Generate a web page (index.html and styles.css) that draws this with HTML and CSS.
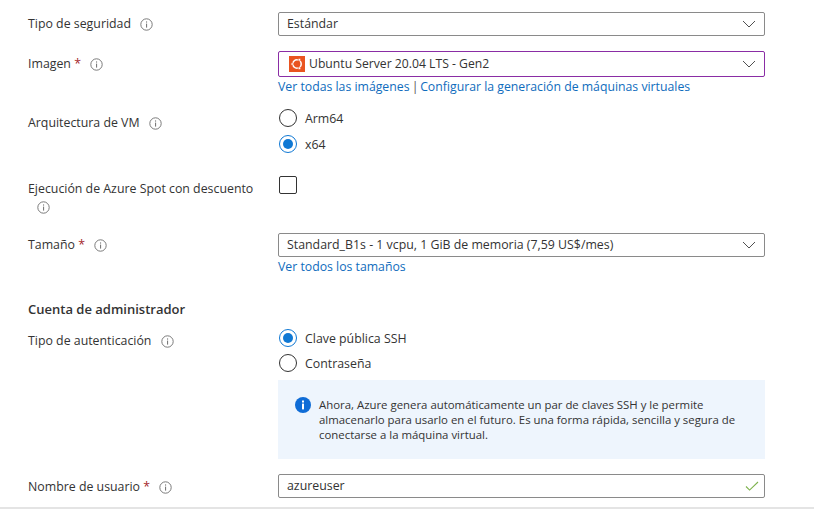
FILE: index.html
```html
<!DOCTYPE html>
<html lang="es">
<head>
    <meta charset="UTF-8">
    <meta name="viewport" content="width=device-width, initial-scale=1.0">
    <title>Crear máquina virtual</title>
    <link rel="stylesheet" href="styles.css">
</head>
<body>
    <svg class="defs" width="0" height="0" aria-hidden="true">
        <symbol id="info" viewBox="0 0 13 13">
            <circle cx="6.5" cy="6.5" r="5.7" fill="none" stroke="#7a7a7a" stroke-width="1"/>
            <rect x="6" y="5.6" width="1.1" height="4" fill="#7a7a7a"/>
            <rect x="6" y="3.4" width="1.1" height="1.2" fill="#7a7a7a"/>
        </symbol>
        <symbol id="chevron" viewBox="0 0 14 8">
            <path d="M1 1l6 6 6-6" fill="none" stroke="#505050" stroke-width="1"/>
        </symbol>
    </svg>

    <div class="form">
        <div class="row row-security">
            <div class="label">Tipo de seguridad <svg class="info"><use href="#info"/></svg></div>
            <div class="field">
                <div class="select">Estándar <svg class="chevron"><use href="#chevron"/></svg></div>
            </div>
        </div>

        <div class="row row-image">
            <div class="label label-image">Imagen <span class="req">*</span> <svg class="info"><use href="#info"/></svg></div>
            <div class="field">
                <div class="select select-focus">
                    <svg class="ubuntu" viewBox="0 0 16 16">
                        <rect width="16" height="16" fill="#e95420"/>
                        <circle cx="8" cy="8" r="4.2" fill="none" stroke="#fff" stroke-width="1.5"/>
                        <circle cx="3.2" cy="8" r="1.3" fill="#fff" stroke="#e95420" stroke-width=".6"/>
                        <circle cx="10.4" cy="3.8" r="1.3" fill="#fff" stroke="#e95420" stroke-width=".6"/>
                        <circle cx="10.4" cy="12.2" r="1.3" fill="#fff" stroke="#e95420" stroke-width=".6"/>
                    </svg>
                    <span class="image-name">Ubuntu Server 20.04 LTS - Gen2</span>
                    <svg class="chevron"><use href="#chevron"/></svg>
                </div>
                <div class="links"><a href="#">Ver todas las imágenes</a> <span class="sep">|</span> <a href="#">Configurar la generación de máquinas virtuales</a></div>
            </div>
        </div>

        <div class="row row-arch">
            <div class="label">Arquitectura de VM <svg class="info"><use href="#info"/></svg></div>
            <div class="field radios">
                <div class="radio"><span class="dot"></span>Arm64</div>
                <div class="radio"><span class="dot on"></span>x64</div>
            </div>
        </div>

        <div class="row row-spot">
            <div class="label label-wrap">Ejecución de Azure Spot con descuento <svg class="info"><use href="#info"/></svg></div>
            <div class="field"><span class="checkbox"></span></div>
        </div>

        <div class="row row-size">
            <div class="label">Tamaño <span class="req">*</span> <svg class="info"><use href="#info"/></svg></div>
            <div class="field">
                <div class="select">Standard_B1s - 1 vcpu, 1 GiB de memoria (7,59 US$/mes) <svg class="chevron"><use href="#chevron"/></svg></div>
                <div class="links links-size"><a href="#">Ver todos los tamaños</a></div>
            </div>
        </div>

        <h2>Cuenta de administrador</h2>

        <div class="row row-auth">
            <div class="label">Tipo de autenticación <svg class="info"><use href="#info"/></svg></div>
            <div class="field">
                <div class="radios radios-auth">
                    <div class="radio"><span class="dot on"></span>Clave pública SSH</div>
                    <div class="radio"><span class="dot"></span>Contraseña</div>
                </div>
                <div class="notice">
                    <svg class="notice-icon" viewBox="0 0 16 16">
                        <circle cx="8" cy="8" r="8" fill="#0f6cd6"/>
                        <rect x="7" y="6.6" width="2" height="5.8" fill="#fff"/>
                        <rect x="7" y="3.5" width="2" height="2" fill="#fff"/>
                    </svg>
                    <p>Ahora, Azure genera automáticamente un par de claves SSH y le permite almacenarlo para usarlo en el futuro. Es una forma rápida, sencilla y segura de conectarse a la máquina virtual.</p>
                </div>
            </div>
        </div>

        <div class="row row-user">
            <div class="label label-user">Nombre de usuario <span class="req">*</span> <svg class="info"><use href="#info"/></svg></div>
            <div class="field">
                <div class="select">azureuser
                    <svg class="check" viewBox="0 0 14 10"><path d="M1 5.5l3.6 3.6L13 1" fill="none" stroke="#7db24c" stroke-width="1.1"/></svg>
                </div>
            </div>
        </div>
    </div>
    <div class="footer-line"></div>
</body>
</html>
```

FILE: styles.css
```css
html, body {
    margin: 0;
    height: 100%;
    overflow: hidden;
}

body {
    background-color: white;
    color: #333;
    font-family: "Open Sans", "Noto Sans", sans-serif;
    font-size: 12.35px;
    position: relative;
}

.defs {
    display: block;
    height: 0;
}

a {
    color: #0f6cbd;
    text-decoration: none;
}

.form {
    padding: 12px 0 0 28px;
    width: 737px;
}

.row {
    display: flex;
}

.label {
    width: 250px;
    flex: none;
    line-height: 24px;
}

.field {
    flex: 1;
    min-width: 0;
}

.info {
    width: 13px;
    height: 13px;
    margin-left: 6px;
    vertical-align: -3px;
}

.req {
    color: #a4262c;
}

.select {
    height: 24px;
    line-height: 22px;
    box-sizing: border-box;
    border: 1px solid #8a8a8a;
    border-radius: 2px;
    padding: 0 8px;
    display: flex;
    align-items: center;
    justify-content: flex-start;
}

.select-focus {
    height: 26px;
    border-color: #8a2da5;
    padding-left: 10px;
}

.image-name {
    font-size: 12.2px;
}

.chevron {
    width: 14px;
    height: 8px;
    margin-left: auto;
    margin-right: 0;
}

.check {
    width: 14px;
    height: 10px;
    margin-left: auto;
    margin-right: -3px;
}

.ubuntu {
    width: 16px;
    height: 16px;
    margin-right: 4px;
}

.links {
    font-size: 12.27px;
    line-height: 20px;
}

.sep {
    color: #555;
    margin: 0 -1.5px 0 -1px;
}

.row-image {
    margin-top: 15px;
}

.label-image {
    line-height: 25px;
}

.row-arch {
    margin-top: 12px;
}

.row-arch .label {
    line-height: 26px;
    padding-top: 1px;
}

.radios {
    display: flex;
    flex-direction: column;
    gap: 8px;
}

.radios-auth {
    gap: 7px;
}

.radio {
    display: flex;
    align-items: center;
    height: 18px;
    margin-left: 1px;
}

.dot {
    width: 18px;
    height: 18px;
    box-sizing: border-box;
    border: 1px solid #333;
    border-radius: 50%;
    margin-right: 8px;
    flex: none;
    display: flex;
    align-items: center;
    justify-content: center;
}

.dot.on {
    border-color: #0f78d4;
}

.dot.on::after {
    content: "";
    width: 10px;
    height: 10px;
    border-radius: 50%;
    background-color: #0f78d4;
}

.row-spot {
    margin-top: 23px;
}

.label-wrap {
    box-sizing: border-box;
    padding: 4px 16px 0 0;
    line-height: 17.5px;
}

.label-wrap .info {
    margin-left: 9px;
}

.checkbox {
    display: block;
    width: 18px;
    height: 18px;
    box-sizing: border-box;
    border: 1px solid #333;
    border-radius: 2px;
    margin-left: 1px;
}

.row-size {
    margin-top: 18px;
}

.links-size {
    line-height: 19px;
}

h2 {
    font-size: 13px;
    font-weight: 600;
    margin: 23px 0 0;
    line-height: 20px;
}

.row-auth {
    margin-top: 10px;
}

.notice {
    margin-top: 8px;
    height: 79px;
    box-sizing: border-box;
    background-color: #eef5fd;
    padding: 17px 14px 0 17px;
    display: flex;
    gap: 8px;
}

.notice-icon {
    width: 16px;
    height: 16px;
    flex: none;
}

.notice p {
    margin: 0;
    font-size: 11.4px;
    line-height: 15px;
}

.row-user {
    margin-top: 15px;
}

.label-user {
    padding-top: 1px;
}

.footer-line {
    position: absolute;
    left: 0;
    right: 0;
    top: 507px;
    height: 2px;
    background-color: #e4e4e4;
}
```
